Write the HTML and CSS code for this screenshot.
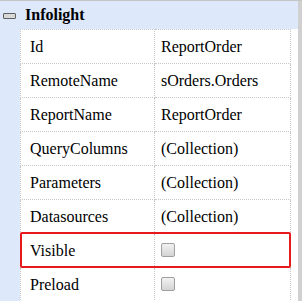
FILE: index.html
```html
<!DOCTYPE html>
<html>
<head>
  <meta charset="UTF-8">
  <title>Property Grid</title>
  <link rel="stylesheet" href="styles.css">
</head>
<body>
  <div id="property-grid">
    <div class="pg-main">
      <div class="pg-group">
        <span class="pg-toggle"></span>
        <span class="pg-title">Infolight</span>
      </div>
      <div class="pg-body">
        <table class="pg-table">
          <tr><td class="pg-name">Id</td><td class="pg-value">ReportOrder</td></tr>
          <tr><td class="pg-name">RemoteName</td><td class="pg-value">sOrders.Orders</td></tr>
          <tr><td class="pg-name">ReportName</td><td class="pg-value">ReportOrder</td></tr>
          <tr><td class="pg-name">QueryColumns</td><td class="pg-value">(Collection)</td></tr>
          <tr><td class="pg-name">Parameters</td><td class="pg-value">(Collection)</td></tr>
          <tr><td class="pg-name">Datasources</td><td class="pg-value">(Collection)</td></tr>
          <tr><td class="pg-name">Visible</td><td class="pg-value"><span class="pg-check"></span></td></tr>
          <tr><td class="pg-name">Preload</td><td class="pg-value"><span class="pg-check"></span></td></tr>
        </table>
      </div>
      <div class="pg-highlight"></div>
    </div>
    <div class="pg-scroll"></div>
  </div>
</body>
</html>
```

FILE: styles.css
```css
body {
  margin: 0;
  font-family: "Liberation Serif", serif;
  font-size: 16px;
  color: #000;
  overflow: hidden;
}
#property-grid {
  display: flex;
  width: 302px;
  height: 301px;
  border-top: 1px solid #c4c4c4;
  box-sizing: border-box;
  overflow: hidden;
}
.pg-main {
  position: relative;
  flex: 1;
  background-color: #dde9fb;
}
.pg-scroll {
  width: 4px;
  background-color: #d0d0d0;
}
.pg-group {
  display: flex;
  align-items: center;
  height: 28px;
  padding-left: 3px;
}
.pg-toggle {
  width: 11px;
  height: 4px;
  border: 1px solid #606060;
  border-radius: 1px;
  background-color: #d8d8d8;
  margin-right: 9px;
  margin-top: 2px;
}
.pg-title {
  font-weight: bold;
}
.pg-body {
  margin-left: 20px;
  background-color: #fff;
  height: 272px;
}
.pg-table {
  border-collapse: collapse;
  width: 271px;
}
.pg-table td {
  font-size: 16px;
  height: 33px;
  padding: 0;
  border: 1px dotted #c8c8c8;
  vertical-align: middle;
}
.pg-table td.pg-name {
  width: 124px;
  padding-left: 9px;
}
.pg-table td.pg-value {
  padding-left: 6px;
}
.pg-check {
  display: block;
  width: 12px;
  height: 12px;
  margin-top: -2px;
  border: 1px solid #a0a0a0;
  border-radius: 2px;
  background: linear-gradient(#f2f2f2, #d4d4d4);
}
.pg-highlight {
  position: absolute;
  left: 20px;
  top: 231px;
  width: 267px;
  height: 32px;
  border: 2px solid #e8191a;
  border-radius: 2px;
}
```
